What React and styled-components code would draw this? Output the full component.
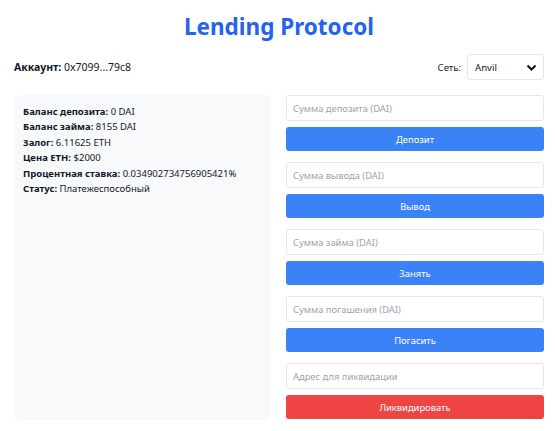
import styled, { createGlobalStyle } from "styled-components";

const GlobalStyle = createGlobalStyle`
  body {
    margin: 0;
    background: #ffffff;
    font-family: "Noto Sans", "Open Sans", sans-serif;
    color: #111827;
  }
  * { box-sizing: border-box; }
`;

const Page = styled.div`
  padding: 10px 11px 0 14px;
`;

const Title = styled.h1`
  margin: 0;
  text-align: center;
  font-size: 22.5px;
  font-weight: 700;
  line-height: 34px;
  color: #2563eb;
`;

const TopBar = styled.div`
  display: flex;
  justify-content: space-between;
  align-items: center;
  margin-top: 10px;
  font-size: 9.6px;
`;

const Account = styled.div`
  font-size: 10.5px;
  b { font-weight: 700; }
`;

const Network = styled.label`
  display: flex;
  align-items: center;
  gap: 6px;
`;

const SelectBox = styled.div`
  position: relative;
  width: 77px;
  height: 26px;
  border: 1px solid #e5e7eb;
  border-radius: 3px;
  display: flex;
  align-items: center;
  padding-left: 7px;
  font-size: 9.6px;
  svg {
    position: absolute;
    right: 6px;
    top: 8px;
  }
`;

const Main = styled.div`
  display: grid;
  grid-template-columns: 257px 258px;
  gap: 15px;
  margin-top: 15px;
`;

const Panel = styled.div`
  background: #f8f9fb;
  border-radius: 6px;
  padding: 9px 9px;
  height: 325px;
  font-size: 9.5px;
  line-height: 15.4px;
`;

const Line = styled.div`
  b { font-weight: 700; }
`;

const Actions = styled.div`
  display: flex;
  flex-direction: column;
  gap: 11px;
`;

const Group = styled.div`
  display: flex;
  flex-direction: column;
  gap: 6px;
`;

const Input = styled.input`
  height: 26px;
  width: 100%;
  border: 1px solid #e5e7eb;
  border-radius: 3px;
  padding: 0 6px;
  font-family: inherit;
  font-size: 9.4px;
  outline: none;
  &::placeholder { color: #9ca3af; }
`;

const Button = styled.button`
  height: 24px;
  width: 100%;
  border: none;
  border-radius: 3px;
  background: ${(p) => (p.$danger ? "#ef4444" : "#3b82f6")};
  color: #ffffff;
  font-family: inherit;
  font-size: 9.4px;
  cursor: pointer;
`;

const actions = [
  { placeholder: "Сумма депозита (DAI)", label: "Депозит" },
  { placeholder: "Сумма вывода (DAI)", label: "Вывод" },
  { placeholder: "Сумма займа (DAI)", label: "Занять" },
  { placeholder: "Сумма погашения (DAI)", label: "Погасить" },
  { placeholder: "Адрес для ликвидации", label: "Ликвидировать", danger: true },
];

const stats = [
  ["Баланс депозита:", "0 DAI"],
  ["Баланс займа:", "8155 DAI"],
  ["Залог:", "6.11625 ETH"],
  ["Цена ETH:", "$2000"],
  ["Процентная ставка:", "0.034902734756905421%"],
  ["Статус:", "Платежеспособный"],
];

export default function App() {
  return (
    <Page>
      <GlobalStyle />
      <Title>Lending Protocol</Title>
      <TopBar>
        <Account>
          <b>Аккаунт:</b> 0x7099...79c8
        </Account>
        <Network>
          Сеть:
          <SelectBox>
            Anvil
            <svg width="11" height="9" viewBox="0 0 11 9">
              <path d="M1.5 2.5 L5.5 6.5 L9.5 2.5" fill="none" stroke="#111" strokeWidth="2" />
            </svg>
          </SelectBox>
        </Network>
      </TopBar>
      <Main>
        <Panel>
          {stats.map(([k, v]) => (
            <Line key={k}>
              <b>{k}</b> {v}
            </Line>
          ))}
        </Panel>
        <Actions>
          {actions.map((a) => (
            <Group key={a.label}>
              <Input placeholder={a.placeholder} />
              <Button $danger={a.danger}>{a.label}</Button>
            </Group>
          ))}
        </Actions>
      </Main>
    </Page>
  );
}
